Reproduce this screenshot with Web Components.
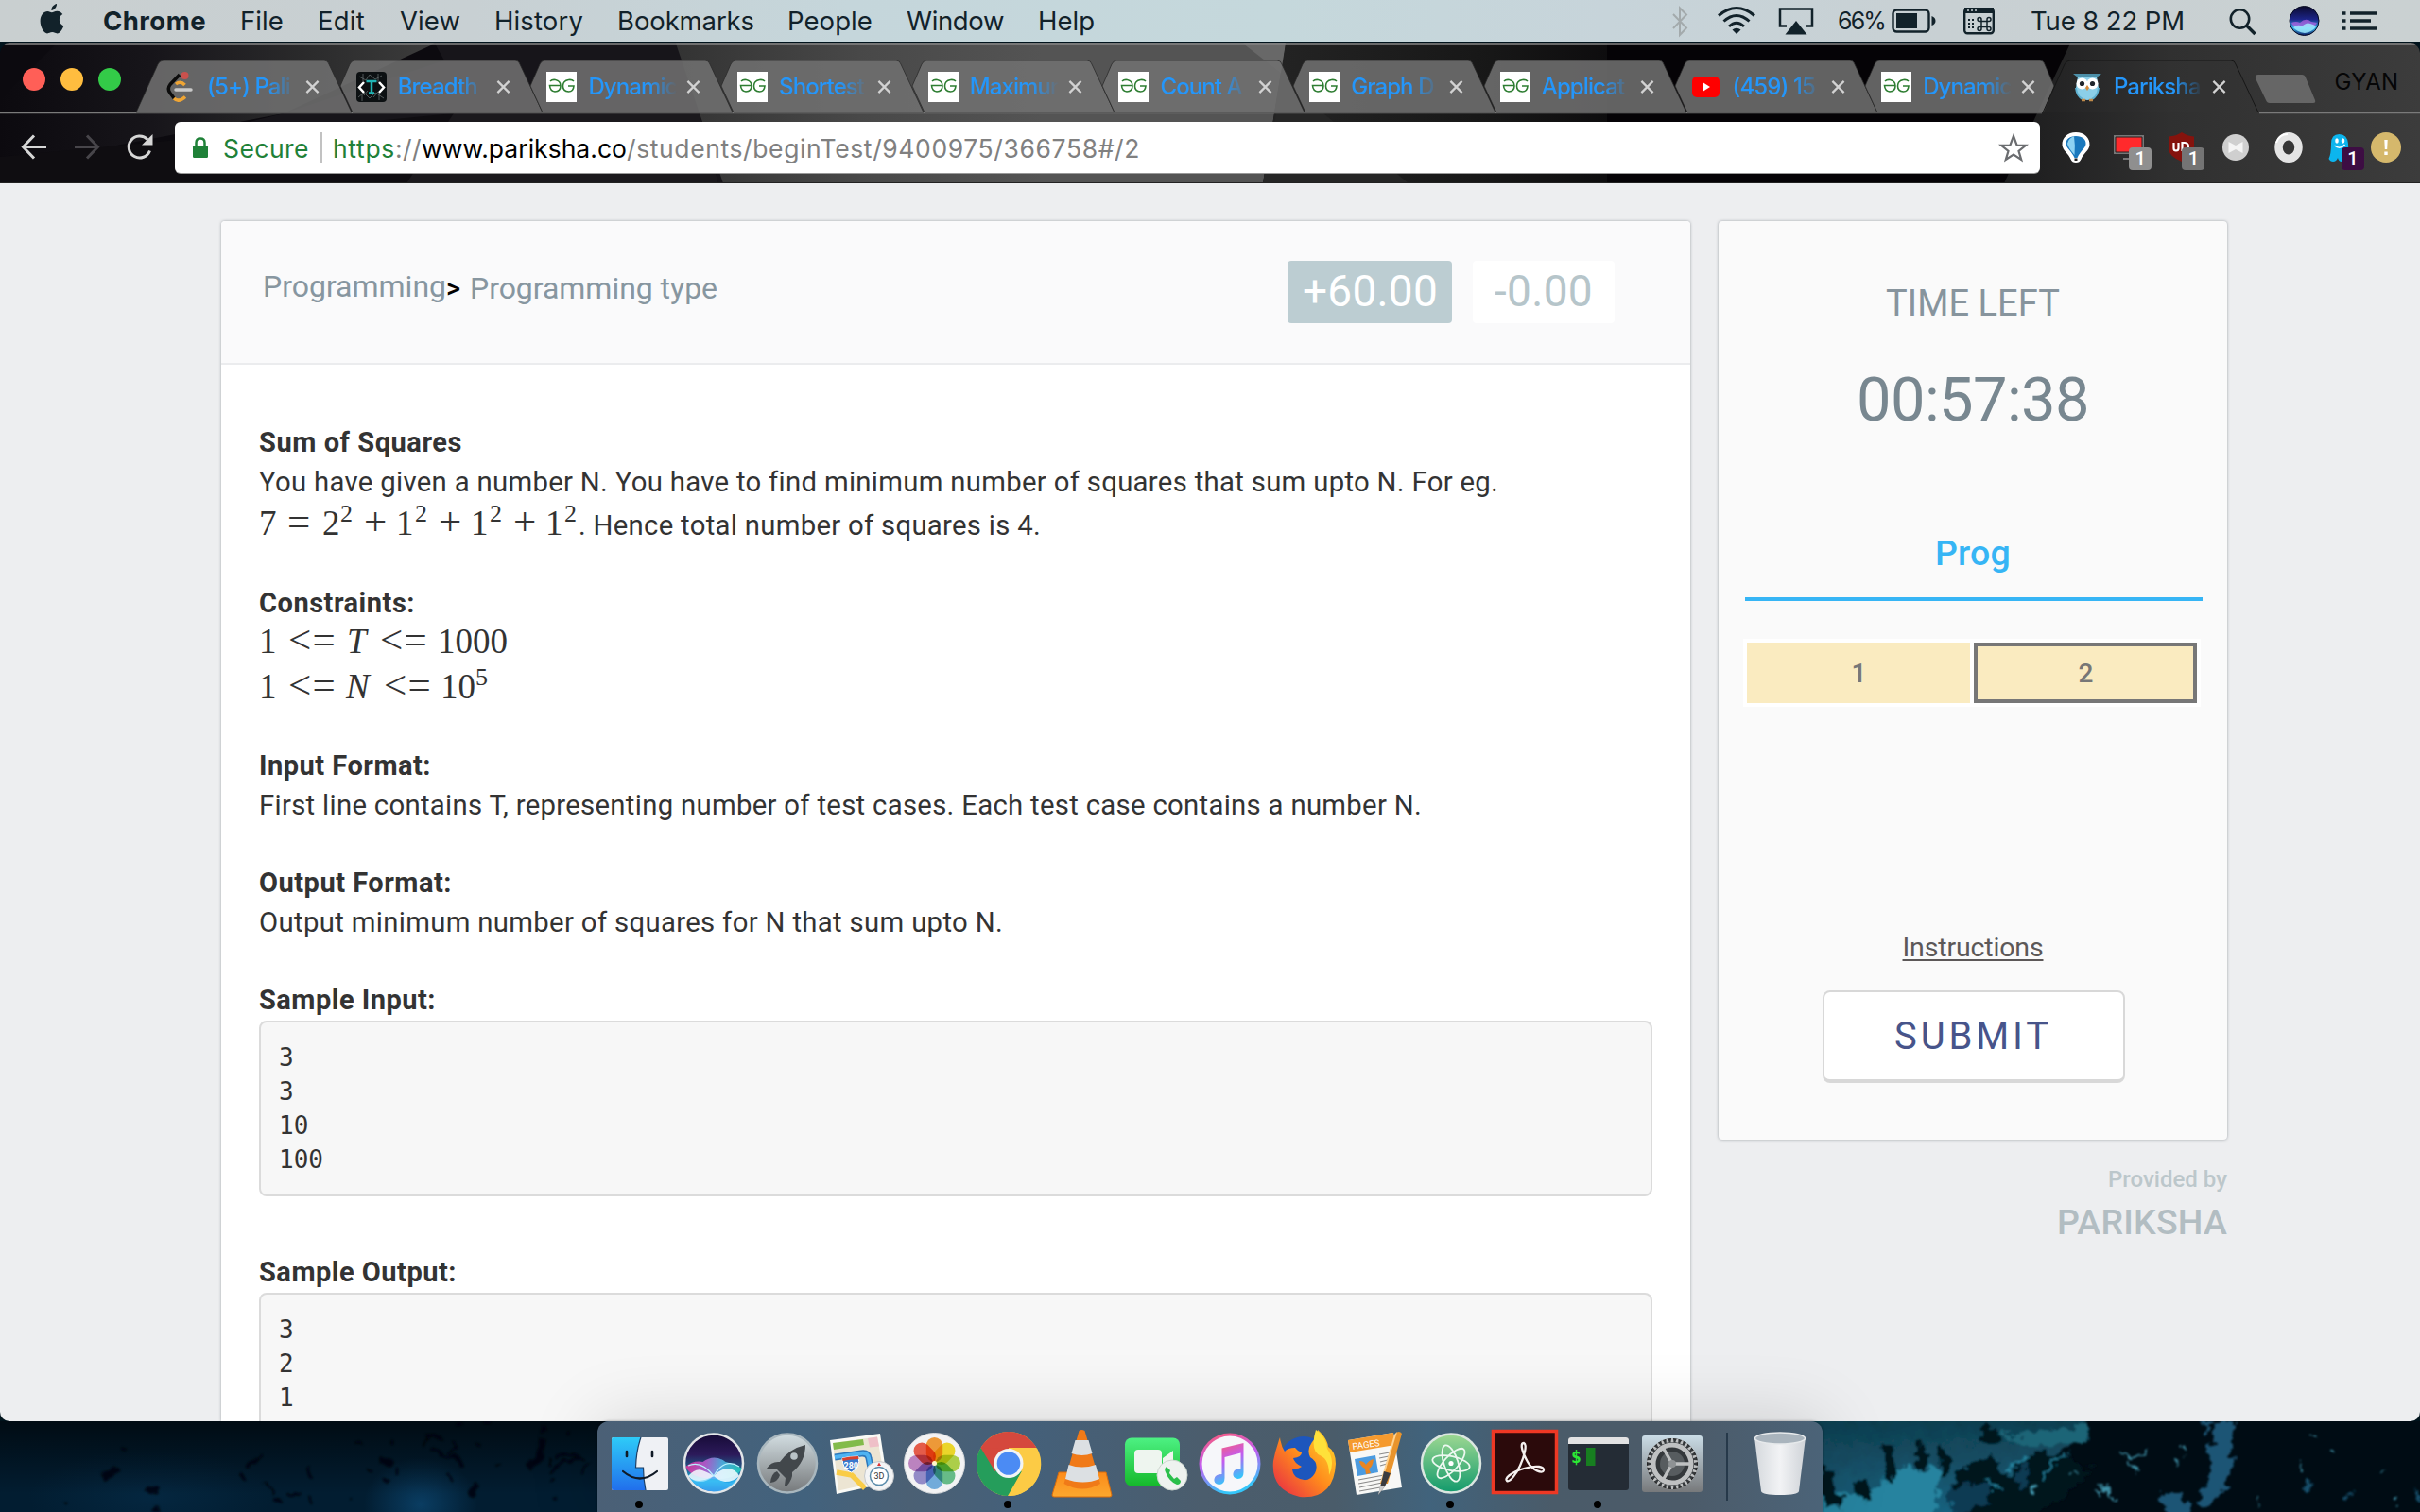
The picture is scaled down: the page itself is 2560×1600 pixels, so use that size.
<!DOCTYPE html>
<html lang="en">
<head>
<meta charset="utf-8">
<title>Pariksha</title>
<style>
html,body{margin:0;width:2560px;height:1600px;overflow:hidden;background:#00131d;font-family:Inter,"Liberation Sans",sans-serif}
</style>
</head>
<body>
<desk-top></desk-top>
<script>
const define=(name,html,after)=>{
  const t=document.createElement('template');t.innerHTML=html;
  customElements.define(name,class extends HTMLElement{
    constructor(){super();this.attachShadow({mode:'open'});}
    connectedCallback(){
      if(this.shadowRoot.childNodes.length)return;
      this.shadowRoot.append(t.content.cloneNode(true));
      if(after)after(this,this.shadowRoot);
    }
  });
};

/* One line of text, letter-spaced so that it fills the width w, starting x px after its neighbour */
define('fit-text',`<style>:host{display:inline-block;white-space:pre;flex:none}span{display:inline-block;text-decoration:inherit}</style><span><slot></slot></span>`,(h,r)=>{
  const w=+h.getAttribute('w'),s=r.querySelector('span');
  if(h.hasAttribute('x'))h.style.marginLeft=h.getAttribute('x')+'px';
  const n=s.getBoundingClientRect().width,c=h.textContent.length;
  h.style.letterSpacing=((w-n)/c).toFixed(3)+'px';
  h.style.width=w+'px';
});

/* ---------- menu bar ---------- */
define('menu-bar',`<style>
:host{display:flex;height:44px;line-height:45px;font-size:27.500px;color:#12222a;background:linear-gradient(90deg,#c9cfd0 0,#c8d0d3 500px,#c5d6db 900px,#c5d8dc 1350px,#c7d4da 1700px,#c8d0d3 2050px,#cad1d2 100%)}
svg{flex:none;display:block;height:44px}
.p{font-size:25px;line-height:44px}
</style>
<svg style="margin-left:42px" width="26" viewBox="0 0 26 44"><path fill="#12222a" d="M18 4c.3 3-2.300 6.800-5.600 7-.4-3 2.500-6.500 5.600-7zM12.800 13.300c1.400 0 3-1.500 5.600-1.500 2.200 0 4.500 1.200 5.900 3.300-5.100 2.900-4.300 10.200 1.100 12.300-1.200 3.200-4 8-6.900 8-2 0-2.700-1.300-5.200-1.300-2.600 0-3.400 1.300-5.300 1.300C4.600 35.400.600 28.800.600 22.300c0-6.400 3.900-10.300 7.600-10.300 2.200 0 3.600 1.300 4.600 1.300z"/></svg>
<fit-text x="41" w="109" style="font-weight:700">Chrome</fit-text>
<fit-text x="36" w="46">File</fit-text>
<fit-text x="36" w="50">Edit</fit-text>
<fit-text x="37" w="64">View</fit-text>
<fit-text x="36" w="94">History</fit-text>
<fit-text x="36" w="145">Bookmarks</fit-text>
<fit-text x="35" w="90">People</fit-text>
<fit-text x="36" w="103">Window</fit-text>
<fit-text x="36" w="60">Help</fit-text>
<svg style="margin-left:609px" width="22" viewBox="0 0 22 44"><path d="M3 15l14 14.500-7 7.500V8.500l7 7L3 30" fill="none" stroke="#a3aaac" stroke-width="2"/></svg>
<svg style="margin-left:27px" width="42" viewBox="0 0 42 44"><g fill="none" stroke="#12222a" stroke-width="3"><path d="M2 16.500q19-16 38 0M7.500 22.500q13.500-12 27 0M13 28q8-7.500 16 0"/></g><path d="M16.500 31.500q4.500-3.500 9 0L21 36z" fill="#12222a"/></svg>
<svg style="margin-left:23px" width="38" viewBox="0 0 38 44"><path d="M9 27.500H2V9.500h34v18h-7" fill="none" stroke="#12222a" stroke-width="2.500"/><path d="M19 22l11.500 14.500H7.500z" fill="#12222a"/></svg>
<fit-text class="p" x="25" w="50">66%</fit-text>
<svg style="margin-left:7px" width="47" viewBox="0 0 47 44"><rect x="1.500" y="10.500" width="38" height="23" rx="4" fill="none" stroke="#12222a" stroke-width="2.400"/><rect x="5" y="14" width="22" height="16" fill="#12222a"/><path d="M42.500 17q4 1.500 4 5t-4 5z" fill="#12222a"/></svg>
<svg style="margin-left:29px" width="33" viewBox="0 0 33 44"><rect x="1.200" y="9.200" width="30.600" height="26" rx="3" fill="none" stroke="#12222a" stroke-width="2.400"/><path d="M1 8h31v6H1z" fill="#12222a"/><path d="M4 11h2m2 0h2m2 0h2" stroke="#c8d0d3" stroke-width="1.500"/><path d="M5 21h2m2 0h2M5 25h2m2 0h2M5 29h2m2 0h2" stroke="#12222a" stroke-width="1.800"/><path d="M19 22.500h6v6h-6zM19 22.500h-2a2 2 0 1 1 2-2zm6 0h2a2 2 0 1 0-2-2zm-6 6h-2a2 2 0 1 0 2 2zm6 0h2a2 2 0 1 1-2 2z" fill="none" stroke="#12222a" stroke-width="1.500"/></svg>
<fit-text x="38" w="163">Tue 8 22 PM</fit-text>
<svg style="margin-left:47px" width="31" viewBox="0 0 31 44"><circle cx="11.500" cy="20" r="9.700" fill="none" stroke="#12222a" stroke-width="2.600"/><path d="M18.500 27l9 9" stroke="#12222a" stroke-width="3.400"/></svg>
<svg style="margin-left:32px" width="33" viewBox="0 0 33 44"><defs><linearGradient id="g" x2="0" y2="1"><stop offset="0" stop-color="#0b0a2c"/><stop offset=".45" stop-color="#1c2488"/><stop offset=".75" stop-color="#38b5e8"/><stop offset="1" stop-color="#0e1b66"/></linearGradient></defs><circle cx="16.500" cy="22" r="15.500" fill="url(#g)" stroke="#070b24"/><path d="M3 24q5-2 9 0 6-6 12-1l6 1q-2 5-8 5H10q-5 0-7-5z" fill="#b060e0" opacity=".75"/><path d="M5 29q5-4 9-1 5-5 9-3 4 1 6 3-4 6-12 7-8-1-12-6z" fill="#9eeaff" opacity=".85"/></svg>
<svg style="margin-left:23px" width="38" viewBox="0 0 38 44"><path d="M9 14h28M9 22h22M9 30h28M0 14h4.500M0 22h4.500M0 30h4.500" stroke="#12222a" stroke-width="3.600"/></svg>`);

/* ---------- browser frame ---------- */
const GG='<svg viewBox="0 0 32 32"><path fill="#fff" d="M0 0h32v32H0z"/><g fill="none" stroke="#2d7d31" stroke-width="1.600"><path d="M4 10q2-2 5.500-1.500 5.500 1 5.500 6.500t-6 6Q4 20.500 3.500 14.500H15M29 10q-2-2-5.500-1.500-6 1-6 6.500t6 6q5 0 5.500-6h-6"/></g></svg>';
const ICONS={
 leet:'<svg viewBox="0 0 32 32"><path d="M15 3L5 13.500Q1.500 18 5 22.500l4.500 6" fill="none" stroke="#0c0c0c" stroke-width="3.500"/><path d="M11 13q5-4 9.500 1M9 28q5 5 12-1.500" fill="none" stroke="#efa534" stroke-width="3.500"/><path d="M11 19h16" stroke="#c9c9c9" stroke-width="3.500" stroke-linecap="round"/><circle cx="20.500" cy="4" r="4" fill="#c9514d"/></svg>',
 tech:'<svg viewBox="0 0 32 32"><rect width="32" height="32" rx="4" fill="#0c1012"/><g stroke="#636b6c" stroke-width=".8" fill="none"><path d="M3 5l7 4 4-6 6 5 7-4M2 27l6-5 6 6 6-6 9 6M7 2v8m16-8v9M6 23v8m18-9v8M12 20l-4 5m15-4l-5 6"/></g><path d="M8 11l-5 5.500L8 22M24 11l5 5.500L24 22" fill="none" stroke="#fff" stroke-width="2.500"/><path d="M10.500 10h11M16 10v13M13 22.500h6" stroke="#20b5b5" stroke-width="2.500"/></svg>',
 gg:GG,
 yt:'<svg viewBox="0 0 32 32"><rect x="1" y="5" width="29" height="22" rx="5" fill="#f00"/><path d="M12 11l8 5-8 5z" fill="#fff"/></svg>',
 owl:'<svg viewBox="0 0 32 32"><path d="M6 5h20l2 12q0 12-12 13Q4 29 4 17z" fill="#8bcfe8"/><path d="M1 2h30l-5 4H6z" fill="#4c8fa8"/><circle cx="10.500" cy="12.500" r="6" fill="#fff"/><circle cx="21.500" cy="12.500" r="6" fill="#fff"/><circle cx="10.500" cy="12.500" r="2.600" fill="#20262c"/><circle cx="21.500" cy="12.500" r="2.600" fill="#20262c"/><path d="M16 14l-2 3 2 3 2-3z" fill="#d98c3a"/><path d="M4 17q1 9 7 12M28 17q-1 9-7 12" stroke="#5fb2d2" stroke-width="2" fill="none"/><path d="M10 30h4m4 0h4" stroke="#c08a4a" stroke-width="2.500"/></svg>'
};
define('browser-tab',`<style>
:host{display:block;position:relative;flex:none;width:201.700px;height:55px}
.bg{position:absolute;left:0;top:0;width:230px;height:56px;overflow:visible}
.row{position:relative;display:flex;align-items:center;height:56px;padding-left:31px}
.ic,.ic svg{display:block;width:32px;height:32px}
.t{margin-left:12px;width:94px;overflow:hidden;white-space:nowrap;font:450 24px/40px Inter,sans-serif;letter-spacing:-.9px;color:#2496fa;-webkit-mask:linear-gradient(90deg,#000 64px,transparent 94px);mask:linear-gradient(90deg,#000 64px,transparent 94px)}
.x{margin-left:10px;width:15px;height:16px;flex:none}
</style><svg class="bg" viewBox="0 0 230 56"><path/></svg><div class="row"><div class="ic"></div><div class="t"><slot></slot></div><svg class="x" viewBox="0 0 16 16"><path d="M1.500 1.500l13 13m0-13l-13 13" stroke="#d2d2d2" stroke-width="2.400"/></svg></div>`,(h,r)=>{
  const p=r.querySelector('path'),k=h.getAttribute('kind');
  const d={first:'M0 55L23 4Q25 0 29 0H199Q203 0 204 4L228 55Z',mid:'M14 27L24 4Q26 0 29 0H199Q203 0 204 4L228 55H27Z',last:'M14 27L24 4Q26 0 29 0H199Q203 0 204 4L214 27L203 55H27Z',active:'M0 55L23 4Q25 0 29 0H199Q203 0 204 4L228 55'}[k];
  p.setAttribute('d',d);
  if(k==='active'){p.setAttribute('fill','rgba(60,60,60,.12)');p.setAttribute('stroke','#171717');}
  else{p.setAttribute('fill','rgba(113,113,113,.87)');p.setAttribute('stroke','rgba(40,40,40,.75)');}
  r.querySelector('.ic').innerHTML=ICONS[h.getAttribute('icon')];
});

define('tab-strip',`<style>
:host{display:flex;height:73px;box-sizing:border-box;padding-top:18px}
.lights{display:flex;gap:16px;width:120px;padding:8px 0 0 24px;flex:none}
.lights i{width:24px;height:24px;border-radius:50%}
.new{margin:15px 0 0 22px;width:65px;height:30px;flex:none}
.who{font-size:24px;line-height:30px;margin-top:8px;color:#060606}
</style>
<div class="lights"><i style="background:#ff5f57"></i><i style="background:#ffbd3f"></i><i style="background:#33cb48"></i></div>
<browser-tab kind="first" icon="leet">(5+) Pali</browser-tab>
<browser-tab kind="mid" icon="tech">Breadth</browser-tab>
<browser-tab kind="mid" icon="gg">Dynamic</browser-tab>
<browser-tab kind="mid" icon="gg">Shortest</browser-tab>
<browser-tab kind="mid" icon="gg">Maximum</browser-tab>
<browser-tab kind="mid" icon="gg">Count A</browser-tab>
<browser-tab kind="mid" icon="gg">Graph D</browser-tab>
<browser-tab kind="mid" icon="gg">Applicat</browser-tab>
<browser-tab kind="mid" icon="yt">(459) 15</browser-tab>
<browser-tab kind="last" icon="gg">Dynamic</browser-tab>
<browser-tab kind="active" icon="owl">Pariksha</browser-tab>
<svg class="new" viewBox="0 0 65 30"><path d="M4 0h46q3 0 4 3l10 24q1 3-2 3H16q-3 0-4-3L1 4Q0 0 4 0z" fill="#666"/></svg>
<fit-text class="who" x="20" w="68">GYAN</fit-text>`);

define('tool-bar',`<style>
:host{display:flex;height:75px;box-sizing:border-box;padding-top:10px}
svg{display:block;flex:none;overflow:visible}
.box{display:flex;width:1973px;height:54px;margin-left:23px;background:#fff;border-radius:6px;box-shadow:0 1px 0 #999;color:#808080;font-size:26.500px;line-height:56px;flex:none}
.g{color:#1f8138}
.sep{width:2px;height:32px;margin:11px 13px 0 12px;background:#c2c2c2}
.ext{display:flex;height:54px;flex:none}
.e{position:relative;width:32px;margin-right:24.200px;padding-top:11px;flex:none}
.b{position:absolute;left:16px;top:27px;width:24px;height:24px;border-radius:4px;background:#8f8f8f;color:#fff;font:500 20px/25px Roboto,sans-serif;text-align:center}
</style>
<svg style="margin-left:23px" width="139" height="54" viewBox="0 0 139 54"><path d="M26 26.500H2M13 14.500L1.500 26.500 13 38.500" fill="none" stroke="#d6d6d6" stroke-width="3"/><path d="M56 26.500h24M69 14.500l11.500 12L69 38.500" fill="none" stroke="#47454a" stroke-width="3"/><path d="M135.500 30.500a11.500 11.500 0 1 1-2.500-12" fill="none" stroke="#d6d6d6" stroke-width="3"/><path d="M138.500 13v11.500H127z" fill="#d6d6d6"/></svg>
<div class="box">
<svg style="margin-left:19px" width="16" height="54" viewBox="0 0 16 54"><rect y="25" width="16" height="13" rx="1.500" fill="#1f8138"/><path d="M3.500 26v-4q0-4.500 4.500-4.500t4.500 4.500v4" fill="none" stroke="#1f8138" stroke-width="2.500"/></svg>
<fit-text class="g" x="16" w="91">Secure</fit-text><div class="sep"></div>
<fit-text class="g" x="-2" w="66">https</fit-text><fit-text w="28">://</fit-text><fit-text w="217" style="color:#000">www.pariksha.co</fit-text><fit-text w="543">/students/beginTest/9400975/366758#/2</fit-text>
<svg style="margin-left:909px" width="30" height="54" viewBox="0 0 30 54"><path d="M15 15l3.500 9.500 9.500.3-7.500 6 2.700 9.200-8.200-5.500L6.800 40l2.700-9.200-7.500-6 9.500-.3z" fill="none" stroke="#6b6d70" stroke-width="2.200"/></svg>
</div>
<div class="ext" style="margin-left:22px">
<div class="e"><svg width="32" height="32" viewBox="0 0 32 32"><path d="M16 0C7 0 1 6 1.500 13.500c.5 6 6.500 8.500 9 15q1.500 3.500 5.500 3.500t5.500-3.500c2.500-6.500 8.500-9 9-15C31 6 25 0 16 0z" fill="#fff"/><path d="M16 4C9 4 5 8 5.500 12.500 6 17 11.500 20 14.500 27h3c3-7 8.500-10 9-14.500C27 8 23 4 16 4z" fill="#1a78bd"/><path d="M14 4.300q-6 2-7 7.700.5 4 7.500 12 1-10-.5-19.700z" fill="#8ed2f2"/><path d="M14.500 27.500h3v2.500h-3z" fill="#222"/></svg></div>
<div class="e"><svg width="32" height="32" viewBox="0 0 32 32"><path d="M0 3h32v20H0z" fill="#777"/><path d="M2 5h28v16H2z" fill="#ff2a2c" stroke="#222"/><path d="M10 27h12v2H10z" fill="#777"/></svg><span class="b">1</span></div>
<div class="e"><svg width="32" height="32" viewBox="0 0 32 32"><path d="M16 0q6 4 13 4.500v13Q28 26 16 31 3 26 2 17.500v-13Q10 4 16 0z" fill="#85130d"/><path d="M7.500 11v6q0 2.500 2.500 2.500t2.500-2.500v-6m4 9v-9h2.500q4 .5 4 4t-4 4" fill="none" stroke="#fff" stroke-width="2.200"/></svg><span class="b" style="background:#747474">1</span></div>
<div class="e"><svg width="32" height="32" viewBox="0 0 32 32"><circle cx="16" cy="16" r="14" fill="#cfcfcf"/><path d="M8.500 10l7.500 4 7.500-4v12L16 18l-7.500 4z" fill="#f4f4f4"/></svg></div>
<div class="e"><svg width="32" height="32" viewBox="0 0 32 32"><ellipse cx="16" cy="16" rx="10.500" ry="11.800" fill="none" stroke="#e4e4e4" stroke-width="8.500"/><path d="M3 11Q6 2 15 2" stroke="#fff" stroke-width="2" fill="none"/></svg></div>
<div class="e"><svg width="32" height="32" viewBox="0 0 32 32"><path d="M5 12Q5 2 13.500 2T23 12q0 10 3 17-4 0-5-3-1.500 5-5 5-3 0-4-4-1.500 4-5 4-3 0-4.500-3 2.500-5 2.500-16z" fill="#0cb5ee"/><ellipse cx="11" cy="9" rx="1.800" ry="2.800" fill="#fff"/><ellipse cx="17.500" cy="9" rx="1.800" ry="2.800" fill="#fff"/><path d="M8.500 14q6 5 11-1" stroke="#fff" stroke-width="1.500" fill="none"/></svg><span class="b" style="background:#3d0d43">1</span></div>
<div class="e" style="margin-left:-9px;margin-right:0"><svg width="32" height="32" viewBox="0 0 32 32"><circle cx="16" cy="16" r="16" fill="#d5b86c"/><path d="M14.300 8h3.400l-.5 10h-2.400zM14.300 20.500h3.400v3.400h-3.400z" fill="#fff"/></svg></div>
</div>`);

define('browser-chrome',`<style>
:host{display:grid;height:148px}
:host>*{grid-area:1/1}
.art{display:block;width:2560px;height:148px}
.col{display:flex;flex-direction:column;position:relative}
</style>
<svg class="art" viewBox="0 0 2560 148"><defs>
<linearGradient id="a"><stop offset="0" stop-color="#0c0a0f"/><stop offset=".35" stop-color="#17151a"/><stop offset=".7" stop-color="#2a2a2b"/><stop offset="1" stop-color="#3c3c3c"/></linearGradient>
<linearGradient id="b"><stop offset="0" stop-color="#333"/><stop offset=".3" stop-color="#484848"/><stop offset=".6" stop-color="#545454"/><stop offset="1" stop-color="#545454"/></linearGradient>
<linearGradient id="c"><stop offset="0" stop-color="#242424"/><stop offset=".5" stop-color="#171717"/><stop offset="1" stop-color="#050306"/></linearGradient>
<linearGradient id="d"><stop offset="0" stop-color="#1c1c1d"/><stop offset=".4" stop-color="#303030"/><stop offset="1" stop-color="#3c3c3c"/></linearGradient></defs>
<path fill="#0c0a0f" d="M0 0h2560v148H0z"/><path d="M60 0H460L300 74 60 120H0V60z" fill="url(#a)"/><path d="M460 0h260l50 148H0L300 74 470 18z" fill="#17151a"/>
<path d="M0 120L480 74h260l20 74H0z" fill="#0f0d11"/><path d="M480 74h260l20 74H430z" fill="#1b191d"/><path d="M715 0h645l-24 148H765z" fill="url(#b)"/><path d="M1315 0h45l-4 32z" fill="#686868"/>
<path d="M1360 0h460l-60 148h-424z" fill="url(#c)"/><path d="M1350 74h50l90 74h-154z" fill="#262626"/><path fill="#050306" d="M1700 0h494l-70 148h-424z"/><path d="M2190 0h370v148h-440z" fill="url(#d)"/>
<path d="M0 1h2560" stroke="#858585" stroke-width="1.500"/><path d="M0 73.200h2160m230 0h170" stroke="#7a7a7a" stroke-width="2"/><path d="M0 147.500h2560" stroke="#222"/></svg>
<div class="col"><tab-strip></tab-strip><tool-bar></tool-bar></div>`);

/* ---------- test page ---------- */
define('score-badge',`<style>:host{display:block;height:66px;border-radius:4px;font:400 46px/64px Roboto,sans-serif;flex:none;box-sizing:border-box}</style><slot></slot>`);

define('math-line',`<style>:host{display:flex;align-items:baseline;font-family:"Liberation Serif",serif;font-size:37px;white-space:nowrap}
::slotted(i){display:inline-block;font-style:normal;flex:none}</style><slot></slot>`,h=>{
  for(const e of h.querySelectorAll('i[w]'))e.style.width=e.getAttribute('w')+'px';
});

define('sample-box',`<style>:host{display:block;box-sizing:border-box;height:186px;width:1474px;border:2px solid #dbdbdb;border-radius:8px;background:#f7f7f7;padding:19px 0 0 19px}
pre{margin:0;font:26px/36px "DejaVu Sans Mono","Liberation Mono",monospace;color:#333}</style><pre><slot></slot></pre>`);

define('question-card',`<style>
:host{display:block;width:1554px;height:1270px;background:#fff;border-radius:4px 4px 0 0;box-shadow:0 0 3px rgba(70,80,90,.5);color:#333;font:29.300px/42px Roboto,sans-serif;flex:none}
header{display:flex;height:150px;background:#fafafb;border-bottom:2px solid #ebecee;border-radius:4px 4px 0 0;color:#8796a0;font-size:32px;line-height:40px}
.body{padding:61px 0 0 40px}
.l{height:42px;display:flex}
.s{font-size:26px;position:relative;top:-14px;line-height:0}
.o{font-size:43px;line-height:0}
h4{margin:0;font-size:29px;font-weight:700;height:42px;display:flex}
</style>
<header>
<fit-text x="44" w="194" style="margin-top:49px">Programming</fit-text><span style="color:#000;font:500 29px/40px Roboto,sans-serif;margin-top:51px;width:17px">&gt;</span><fit-text x="8" w="262" style="margin-top:51px">Programming type</fit-text>
<score-badge style="margin:42px 0 0 603px;width:174px;background:#bccdd2;color:#fff"><fit-text x="16" w="143">+60.00</fit-text></score-badge>
<score-badge style="margin:42px 0 0 22px;width:150px;background:#fff;color:#b6c5ca"><fit-text x="23" w="104">-0.00</fit-text></score-badge>
</header>
<div class="body">
<h4><fit-text w="215">Sum of Squares</fit-text></h4>
<div class="l"><fit-text w="1310">You have given a number N. You have to find minimum number of squares that sum upto N. For eg.</fit-text></div>
<math-line style="height:86px;line-height:46px"><i w="30">7</i><i w="37" class="o">=</i><i w="19">2</i><i w="25" class="s">2</i><i w="34" class="o">+</i><i w="20">1</i><i w="25" class="s">2</i><i w="34" class="o">+</i><i w="20">1</i><i w="25" class="s">2</i><i w="34" class="o">+</i><i w="20">1</i><i w="15" class="s">2</i><fit-text w="489" style="font:29.300px/45px Roboto,sans-serif">. Hence total number of squares is 4.</fit-text></math-line>
<h4><fit-text w="165">Constraints:</fit-text></h4>
<math-line style="height:48px;line-height:39px"><i w="31">1</i><fit-text class="o" w="51">&lt;=</fit-text><i w="46" style="font-style:italic;text-indent:11px">T</i><fit-text class="o" w="51">&lt;=</fit-text><fit-text x="10" w="74">1000</fit-text></math-line>
<math-line style="height:82px;line-height:39px"><i w="31">1</i><fit-text class="o" w="51">&lt;=</fit-text><i w="50" style="font-style:italic;text-indent:10px">N</i><fit-text class="o" w="51">&lt;=</fit-text><fit-text x="9" w="37">10</fit-text><i class="s">5</i></math-line>
<h4><fit-text w="182">Input Format:</fit-text></h4>
<div class="l" style="height:82px"><fit-text w="1230">First line contains T, representing number of test cases. Each test case contains a number N.</fit-text></div>
<h4><fit-text w="204">Output Format:</fit-text></h4>
<div class="l" style="height:82px"><fit-text w="787">Output minimum number of squares for N that sum upto N.</fit-text></div>
<h4><fit-text w="187">Sample Input:</fit-text></h4>
<sample-box style="margin-top:1px;margin-bottom:59px">3
3
10
100</sample-box>
<h4><fit-text w="209">Sample Output:</fit-text></h4>
<sample-box style="margin-top:1px">3
2
1</sample-box>
</div>`);

define('time-panel',`<style>
:host{display:flex;flex-direction:column;width:538px;flex:none;font-family:Roboto,sans-serif}
.card{display:flex;flex-direction:column;align-items:center;height:972px;background:#fafafa;border-radius:4px;box-shadow:0 0 3px rgba(70,80,90,.5)}
.card>*{flex:none}
.q{display:flex;gap:4px;padding:4px;background:#fff;width:476px;margin:40px 2px 0 0}
.q b{width:236px;height:64px;box-sizing:border-box;background:#faebc0;color:#777;font:500 28px/66px Roboto,sans-serif;text-align:center;text-indent:1px}
.q b.on{border:4px solid #777;line-height:58px}
.sub{width:320px;height:98px;box-sizing:border-box;border:2px solid #d8d8d8;border-bottom-width:4px;border-radius:8px;background:#fff;color:#47548a;font-size:40px;line-height:93px;margin:25px 0 0 2px}
.foot{display:flex;flex-direction:column;align-items:flex-end;font-weight:500}
</style>
<div class="card">
<fit-text w="184" style="font-size:38px;line-height:45px;height:44px;color:#87949d;margin-top:65px">TIME LEFT</fit-text>
<fit-text w="246" style="font-size:65px;line-height:70px;height:70px;color:#788790;margin-top:45px">00:57:38</fit-text>
<fit-text w="80" style="font-weight:500;font-size:37.500px;line-height:44px;color:#36b5f5;margin-top:105px">Prog</fit-text>
<div style="width:484px;height:4px;background:#36b5f5;margin:25px 0 0 2px"></div>
<div class="q"><b>1</b><b class="on">2</b></div>
<fit-text w="149" style="font-size:28.500px;line-height:40px;color:#5c5858;margin-top:235px;text-decoration:underline;text-decoration-thickness:2px;text-underline-offset:3px">Instructions</fit-text>
<div class="sub"><fit-text x="74" w="167">SUBMIT</fit-text></div>
</div>
<div class="foot"><fit-text w="126" style="font-size:24px;line-height:30px;color:#bcc7cb;margin-top:27px">Provided by</fit-text>
<fit-text w="180" style="font-size:37.500px;line-height:44px;color:#b2bdc2;margin-top:8px">PARIKSHA</fit-text></div>`);

define('test-page',`<style>:host{display:flex;height:1310px;background:#edeef0;padding:40px 0 0 234px;box-sizing:border-box;gap:30px;overflow:hidden}</style><question-card></question-card><time-panel></time-panel>`);

define('browser-window',`<style>:host{display:block;margin-top:2px;height:1458px;border-radius:10px;overflow:hidden}</style><browser-chrome></browser-chrome><test-page></test-page>`);

/* ---------- dock ---------- */
define('dock-item',`<style>:host{display:block;width:78px;height:96px;flex:none}svg{display:block;overflow:visible}</style><svg width="78" height="96" viewBox="0 0 78 96"></svg>`,(h,r)=>{
  r.querySelector('svg').innerHTML=DOCK[h.getAttribute('app')]+(h.hasAttribute('running')?'<circle cx="38" cy="88" r="4" fill="#000"/>':'');
});
const petals=['#f9a13a','#f6e02c','#b5d94c','#6cc48e','#78b4e4','#9a92d0','#c589c8','#f0604c'].map((c,i)=>`<rect x="-8.700" y="-27.500" width="17.400" height="26" rx="8.700" fill="${c}" style="mix-blend-mode:multiply" transform="translate(38.500 44.500) rotate(${i*45})"/>`).join('');
const teeth=Array.from({length:30},(_,i)=>`<path d="M-1.500-23h3l-.6-4h-1.800z" transform="rotate(${i*12})"/>`).join('');
const DOCK={
finder:`<defs><linearGradient id="a" x2="0" y2="1"><stop offset="0" stop-color="#2ecbf8"/><stop offset="1" stop-color="#216fec"/></linearGradient></defs><rect x="9" y="17" width="60" height="56" rx="2" fill="#eff1f5"/><path d="M11 17h29q-5 14-5.500 32h8q0 12 2.500 24H11q-2 0-2-2V19q0-2 2-2z" fill="url(#a)"/><path d="M40 17q-5 14-5.500 32h8q0 12 2.500 24" fill="none" stroke="#1c3f66" stroke-width="1.200"/><path d="M25 32v5M52 32v5" stroke="#101a26" stroke-width="2.600" stroke-linecap="round"/><path d="M21 53q18 15 36 0" fill="none" stroke="#101a26" stroke-width="2.200" stroke-linecap="round"/>`,
siri:`<defs><linearGradient id="a" x2="0" y2="1"><stop offset="0" stop-color="#160b36"/><stop offset=".35" stop-color="#2c1a5a"/><stop offset=".6" stop-color="#1f5f8a"/><stop offset=".8" stop-color="#27b0ec"/><stop offset="1" stop-color="#1d62d8"/></linearGradient><linearGradient id="k"><stop offset="0" stop-color="#ff2d9c"/><stop offset=".35" stop-color="#d65fe0"/><stop offset=".65" stop-color="#58c8f8"/><stop offset="1" stop-color="#1fe0c0"/></linearGradient></defs><circle cx="39" cy="44.500" r="31" fill="url(#a)" stroke="#e3e6e8" stroke-width="2.500"/><path d="M9.500 48q8-7 18-5 12-9 24 0 10 2 17.500 7-6 12-30 11Q14 60 9.500 48z" fill="url(#k)" opacity=".75"/><path d="M12 58q8-9 15-6 8 3 12 6 6-7 14-8 9 0 13 8-6 6-15 6-8-1-12-6-7 6-14 6-8 0-13-6z" fill="#f4fdff" opacity=".85"/><path d="M15 61q10 5 24-3 14 12 25 4Q55 74 39 74.500 22 73 15 61z" fill="#49c8fa" opacity=".55"/><path d="M12 47q14-6 27 11 11-20 27-10" fill="none" stroke="#b8f2ff" stroke-width="1.300"/>`,
launch:`<defs><linearGradient id="a" x2="0" y2="1"><stop offset="0" stop-color="#d3dee2"/><stop offset="1" stop-color="#76797b"/></linearGradient></defs><circle cx="39" cy="44.500" r="31" fill="url(#a)" stroke="#a9b7be" stroke-width="2.500"/><path d="M58 25Q41 29 31 43q-9-1-14 7l11 1 9 9-1 8 2 1q7-8 6-15 14-11 14-29z" fill="#42474b"/><circle cx="46" cy="37" r="3.800" fill="#b9c2c6"/><path d="M28 53q-6 2-7 12 8-1 10-8z" fill="#42474b"/>`,
maps:`<path d="M6 20l53-7 8 52-54 12z" fill="#fafaf6"/><path d="M9 23l47-6.500 8 46-49 11z" fill="#ece5d3"/><path d="M9 23l32-4 1 6-32 5z" fill="#82bb4a"/><path d="M46 18l10-1.500 2 10-10 1z" fill="#efc0c8"/><path d="M11 38l28-4q7-1 8 5l2 10" fill="none" stroke="#2d78bb" stroke-width="7"/><path d="M11 38l28-4q7-1 8 5l2 10" fill="none" stroke="#4fb3f2" stroke-width="4"/><path d="M13 54l16 3 14 14" fill="none" stroke="#f9cc47" stroke-width="5.500"/><path d="M19 39q8-2 17-2 3 12-7.500 17-9.500-3-9.500-15z" fill="#3a78cc" stroke="#fff"/><path d="M19 39q8-2 17-2l.5 3q-9 0-17 2z" fill="#d9412e"/><text x="20.500" y="50" font-family="Roboto,sans-serif" font-size="9" font-weight="700" fill="#fff">280</text><circle cx="58" cy="58" r="15.500" fill="#f3f4f5" stroke="#c6c9cb"/><circle cx="58" cy="58" r="9.500" fill="#fff" stroke="#5a8cab" stroke-width="1.500"/><path d="M58 43.500l2 3.500h-4z" fill="#d33"/><text x="52.500" y="61" font-family="Roboto,sans-serif" font-size="9" fill="#333">3D</text>`,
photos:`<g style="isolation:isolate"><circle cx="38.500" cy="44.500" r="32" fill="#f3f3f4" stroke="#d9dbdd"/>${petals}</g><circle cx="38.500" cy="44.500" r="2.500" fill="#fff6c8"/>`,
chrome:`<circle cx="39" cy="45" r="34" fill="#fccb45"/><path d="M39 45L9.500 28A34 34 0 0 1 68.500 28H39z" fill="#d5483d"/><path d="M9.500 28A34 34 0 0 0 38 79L53 53 39 45z" fill="#259d5b"/><path d="M9.500 28L24.500 53 39 40V28.500z" fill="#d5483d"/><path d="M39 28.500H69a34 34 0 0 1-30 50.500L53 53z" fill="#fccb45"/><circle cx="39" cy="44.500" r="15.500" fill="#f2f4f5"/><circle cx="39" cy="44.500" r="12.300" fill="#4b8bf4"/>`,
vlc:`<defs><linearGradient id="a" x2="0" y2="1"><stop offset="0" stop-color="#fc8b1a"/><stop offset="1" stop-color="#fca82e"/></linearGradient></defs><path d="M14 54h50l6 24q0 2-2 2H9q-2 0-2-2z" fill="url(#a)" stroke="#d96c0c"/><path d="M35.500 10q2.500-2 6 0L58 66q-19 11-38.500 0z" fill="#f07a18"/><path d="M31.500 20h14l4 14q-11 4-22 0zM24.500 46q14 5 28.500 0l4 15q-17 7-36 0z" fill="#dce0e3"/>`,
facetime:`<defs><linearGradient id="a" x2="0" y2="1"><stop offset="0" stop-color="#4df183"/><stop offset="1" stop-color="#15b92b"/></linearGradient></defs><rect x="6" y="17.500" width="58" height="51" rx="7" fill="url(#a)"/><rect x="16" y="30" width="29" height="25" rx="4" fill="#eef5ef"/><path d="M46 39l11-8v22l-11-8z" fill="#eef5ef"/><circle cx="56" cy="57" r="16" fill="#eef2ef" stroke="#cdd6cf"/><path d="M50 48q-3 2-1 6 4 10 12 13 4 0 4-4l-4-4-3 2-5-6 1-3z" fill="#2abf4a"/>`,
itunes:`<defs><linearGradient id="a" x2=".3" y2="1"><stop offset="0" stop-color="#ff5b6c"/><stop offset=".5" stop-color="#c35cf0"/><stop offset="1" stop-color="#34c6fa"/></linearGradient></defs><circle cx="39" cy="45" r="32.500" fill="url(#a)"/><circle cx="39" cy="45" r="29.500" fill="#f6f7fa"/><path d="M30.500 28.500l23-5.500v31q0 7-6 7-6-1-5-6t8-5V33.500l-17 4.500v22q0 7-6 7-6-1-5-6t8-5z" fill="url(#a)"/>`,
firefox:`<defs><linearGradient id="a" x1="1" x2="0" y2="1"><stop offset="0" stop-color="#ffe12c"/><stop offset=".5" stop-color="#ff8a1c"/><stop offset="1" stop-color="#e5224a"/></linearGradient></defs><circle cx="39" cy="41" r="25" fill="#1d56bd"/><path d="M14 17q-5 14-7 25-3 31 28 38 36 3 38-35 0-13-8-18-1-9-11-18-1 8-6 13-6 8-2 16 10 6 5 17-7 12-20 4-4-4-4-9 6 1 10-2-8-4-9-9 9-1 9-6-5-2-7-5-8 0-11 4-4-6-5-15z" fill="url(#a)"/><path d="M52 9q11 8 12 20 9 13 2 28 0-16-8-20-13-5-6-28z" fill="#ffe13a"/>`,
pages:`<path d="M8 20l48-8 9 58-48 8z" fill="#f8f8f6"/><path d="M8 20l48-8 2 13-48 8z" fill="#f59a2e"/><text x="13" y="30" transform="rotate(-8 13 30)" font-family="Roboto,sans-serif" font-size="9.500" fill="#fff">PAGES</text><path d="M15 40l22-4 3 18-22 4z" fill="#4b9be0"/><path d="M20 42q5 0 7 4 3-5 8-6-1 9-5 10l2 5-5 1-1-6q-5-2-6-8z" fill="#e88522"/><g stroke="#8c8c8c" stroke-width="1.200"><path d="M41 35l11-2M41 39l10-2M42 43l8-2M42 47l7-2M19 62l27-5M19 66l26-5M20 70l24-5M20 74l22-4"/></g><path d="M58 13q4-4 7 0L50 66l-8 0z" fill="#e9942c"/><path d="M57 14l3-3-15 50-3 4z" fill="#ffd391"/><path d="M46 53l7 2-6 14-7 9z" fill="#3a3c40"/><path d="M42 68l5 1-7 9z" fill="#ccc"/>`,
atom:`<defs><linearGradient id="a" x2="0" y2="1"><stop offset="0" stop-color="#9ed892"/><stop offset="1" stop-color="#129a6c"/></linearGradient></defs><circle cx="39" cy="44.500" r="31" fill="url(#a)" stroke="#dbe6e0" stroke-width="2.500"/><g fill="none" stroke="#edf8f0" stroke-width="1.800"><ellipse cx="39" cy="44.500" rx="20" ry="7.500" transform="rotate(12 39 44.500)"/><ellipse cx="39" cy="44.500" rx="20" ry="7.500" transform="rotate(72 39 44.500)"/><ellipse cx="39" cy="44.500" rx="20" ry="7.500" transform="rotate(-48 39 44.500)"/></g><circle cx="39" cy="44.500" r="2.600" fill="#fff"/>`,
acrobat:`<rect x="5.500" y="10.500" width="67" height="65" fill="#2b0a0b" stroke="#ee3824" stroke-width="3.500"/><path d="M38 23c4 2 0 15-4 24s-11 18-14 16 4-9 18-13 22-2 21 2-12 0-17-9-9-20-4-20z" fill="none" stroke="#f5f0ef" stroke-width="2.300"/>`,
terminal:`<rect x="7" y="17" width="64" height="56" rx="3" fill="#242c35"/><path d="M7 24v-4q0-3 3-3h58q3 0 3 3v4z" fill="#e2e2e3"/><text x="10" y="44" font-family="DejaVu Sans Mono,monospace" font-size="18" font-weight="700" fill="#2bea34">$</text><path d="M26 28h9.500v19H26z" fill="#177f20"/>`,
prefs:`<defs><linearGradient id="a" x2="0" y2="1"><stop offset="0" stop-color="#cadce6"/><stop offset="1" stop-color="#77797b"/></linearGradient></defs><rect x="7" y="15" width="64" height="60" rx="3" fill="url(#a)"/><circle cx="39" cy="45" r="26.500" fill="#34383b" stroke="#222"/><g transform="translate(39 45)" fill="#bfc1c2">${teeth}<circle r="20" fill="none" stroke="#bfc1c2" stroke-width="5"/><circle r="13" fill="#575c5f"/><path d="M0 0h19M0 0l-9.500-16.500M0 0l-9.500 16.500" stroke="#bfc1c2" stroke-width="3.500"/><circle r="4" fill="#8e9294"/></g>`,
trash:`<defs><linearGradient id="a"><stop offset="0" stop-color="#d5d9dd"/><stop offset=".5" stop-color="#f2f3f5"/><stop offset="1" stop-color="#cfd3d8"/></linearGradient></defs><path d="M12 17l7 57q1 4 20 4t20-4l7-57z" fill="url(#a)"/><ellipse cx="39" cy="18" rx="26.500" ry="6" fill="#a9b4bd" stroke="#e6e9eb" stroke-width="1.500"/>`
};
define('app-dock',`<style>
:host{display:flex;box-sizing:border-box;width:1296px;height:96px;padding-left:6px;border-radius:12px 12px 0 0;background:linear-gradient(90deg,#4b6076 0,#42627d 220px,#4b6074 330px,#44607a 450px,#4b5d6d 640px,#4a5c6a 780px,#41637c 880px,#4a5b69 1010px,#4c5b69 1150px,#4b6378 1296px);box-shadow:0 0 75px rgba(0,0,0,.15),0 0 3px rgba(0,0,0,.35)}
hr{width:2px;height:72px;margin:12px 16px 0 18px;border:0;background:#26394a}
</style>
<dock-item app="finder" running></dock-item><dock-item app="siri"></dock-item><dock-item app="launch"></dock-item><dock-item app="maps"></dock-item><dock-item app="photos"></dock-item><dock-item app="chrome" running></dock-item><dock-item app="vlc"></dock-item><dock-item app="facetime"></dock-item><dock-item app="itunes"></dock-item><dock-item app="firefox"></dock-item><dock-item app="pages"></dock-item><dock-item app="atom" running></dock-item><dock-item app="acrobat"></dock-item><dock-item app="terminal" running></dock-item><dock-item app="prefs"></dock-item><hr><dock-item app="trash"></dock-item>`);

define('wall-paper',`<style>:host{display:block;width:2560px;height:96px}svg{display:block}</style>
<svg width="2560" height="96" viewBox="0 0 2560 96"><defs>
<linearGradient id="v" x2="0" y2="1"><stop offset="0" stop-color="#000" stop-opacity=".6"/><stop offset=".8" stop-color="#000" stop-opacity="0"/></linearGradient>
<linearGradient id="t" x2="0" y2="1"><stop offset="0" stop-color="#0f3b4b"/><stop offset="1" stop-color="#186482"/></linearGradient>
<radialGradient id="r"><stop offset="0" stop-color="#0a3d62"/><stop offset="1" stop-color="#0a3d62" stop-opacity="0"/></radialGradient>
<filter id="l" filterUnits="userSpaceOnUse" x="0" y="0" width="640" height="96"><feTurbulence type="fractalNoise" baseFrequency=".09" numOctaves="2" seed="7" result="n"/><feDisplacementMap in="SourceGraphic" in2="n" scale="9" xChannelSelector="R" yChannelSelector="G"/><feGaussianBlur stdDeviation="1.200"/></filter>
<filter id="s" filterUnits="userSpaceOnUse" x="1900" y="-10" width="680" height="116"><feTurbulence type="fractalNoise" baseFrequency=".08" numOctaves="4" seed="4" result="n"/><feDisplacementMap in="SourceGraphic" in2="n" scale="22" xChannelSelector="R" yChannelSelector="G"/><feGaussianBlur stdDeviation=".8"/></filter></defs>
<path fill="#021d31" d="M0 0h660v96H0z"/><path fill="#000c14" d="M1900 0h660v96h-660z"/>
<ellipse cx="445" cy="88" rx="60" ry="50" fill="url(#r)"/><ellipse cx="160" cy="80" rx="130" ry="50" fill="url(#r)" opacity=".3"/>
<path fill="url(#v)" d="M0 0h640v96H0z"/>
<g fill="none" stroke="#00060b" stroke-linecap="round" stroke-linejoin="round" filter="url(#l)" opacity=".8"><path stroke-width="7" d="M111 58l12-7M155 71l10 3M166 93l2 4M498 78l7-10M560 48l10-8 4-20M404 43l7 1"/><path stroke-width="4" d="M255 56l4 4M262 46l10-6M292 80l6 5M328 52v8M575 8h1M484 3h4M514 2h4M452 14l14 4M458 30l20 8 12 8"/><path stroke-width="2.500" d="M68 85h.5M272 40l5-5M279 66l10 10M306 78l10-1M378 22l3 3M390 50l4 2M414 20v4M404 60l6 4M420 52v3M448 24l4-8M480 22q6 8-4 10M524 46l4-2M582 40l2 4M602 10v4M582 54l14-12 22-2M616 54l6-8M582 62l4-2M586 82h4M372 84h.5M130 30h3M328 80v8M504 22l4 4"/><path stroke-width="3" d="M588 40q10-8 26-2M474 56l4 6"/></g>
<g filter="url(#s)"><path d="M1890 -10h320l-2 26-22 12-28 20-32 34-60 24h-176z" fill="url(#t)"/><path d="M1910 80l70-8 24-22 50 2-8 54h-136z" fill="#25839f"/><path d="M2120 14l90-10-8 18-60 6z" fill="#1c6577"/>
<path fill="#00131e" d="M1992 26h8l10 36-14 2zM1960 66l14-6 10 10-8 16-14-6zM2026 30l8-8 6 16-6 14-8-4zM2050 26l12 2 2 24-12 8zM2092 8l14-6 12 14-14 12zM1925 48l14 4 10 40-22-6zM2080 44l30-6 10 20 40-26 26 6 30 14-70 56h-80l-4-40zM2140 40l18-8-4 24z"/>
<path fill="#0c3a52" d="M2130 60l12-14 6 6-10 20zM2060 70l50-6-6 26-40 10z"/><g fill="none" stroke="#2a8ba8" stroke-width="2"><path d="M2125 50l20-10M2100 60l16 12M2160 64l10-20 18-8"/></g></g>
<g filter="url(#s)"><path d="M2348 0h14l-2 60-22 32-16-2 18-36-4-26zM2328 0h18l-14 14zM2284 76l20 2 12 12v18h-20l-6-16z" fill="#1d5475"/><g fill="none" stroke="#3f93aa" stroke-width="2.500"><path d="M2244 32l14 6 10-6M2254 44l10 10M2310 26l4 10M2302 38l6 4M2222 70l6 8 12 2M2194 52v6M2394 80l-4 8M2445 18v3M2436 40l-6 16M2464 34h4M2532 82l5 2M2522 54h3"/><path stroke-width="6" d="M2146 76l8-8"/></g><g fill="none" stroke="#174f6c" stroke-width="5"><path d="M2438 72l5-8M2560 76v12M2480 84l8-7"/></g></g></svg>`);

define('desk-top',`<style>
:host{display:flex;flex-direction:column;width:2560px;height:1600px;background:#00131c}
.bottom{display:grid;height:96px}.bottom>*{grid-area:1/1}.bottom app-dock{justify-self:center;position:relative}
</style><menu-bar></menu-bar><browser-window></browser-window><div class="bottom"><wall-paper></wall-paper><app-dock></app-dock></div>`);
</script>
</body>
</html>
